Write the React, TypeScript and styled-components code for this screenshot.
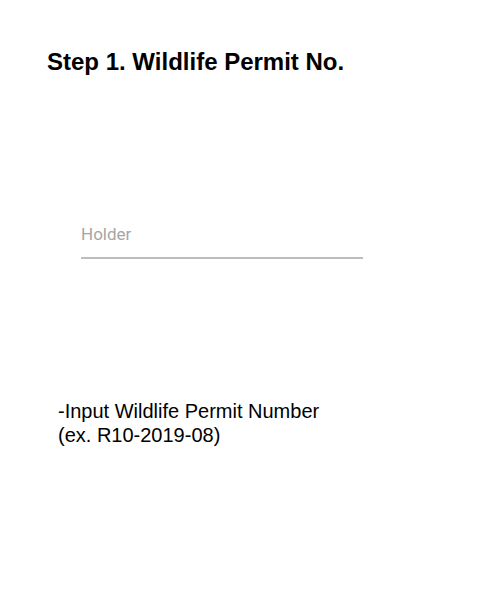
import React from "react";
import styled, { createGlobalStyle } from "styled-components";

const Global = createGlobalStyle`
  html, body { margin: 0; padding: 0; background: #ffffff; }
  body { font-family: "Liberation Sans", Arial, sans-serif; }
`;

const Page = styled.div`
  width: 500px;
  height: 602px;
  display: flex;
  flex-direction: column;
  box-sizing: border-box;
  padding: 48px 0 0 47px;
`;

const Title = styled.h1`
  margin: 0;
  font-family: "Liberation Sans", Arial, sans-serif;
  font-weight: 700;
  font-size: 24px;
  line-height: 28px;
  color: #000;
`;

const Field = styled.label`
  display: flex;
  flex-direction: column;
  width: 282px;
  margin: 148px 0 0 34px;
  border-bottom: 2px solid #bdbdbd;
  padding-bottom: 13px;
`;

const Input = styled.input`
  border: none;
  outline: none;
  padding: 0;
  background: transparent;
  font-family: Roboto, "Noto Sans", sans-serif;
  font-size: 17px;
  line-height: 20px;
  color: #333;
  &::placeholder { color: #a6a6a6; }
`;

const Hint = styled.p`
  margin: 140px 0 0 11px;
  font-family: "Liberation Sans", Arial, sans-serif;
  font-size: 20px;
  line-height: 24px;
  color: #000;
`;

export default function App() {
  return (
    <>
      <Global />
      <Page>
        <Title>Step 1. Wildlife Permit No.</Title>
        <Field>
          <Input placeholder="Holder" />
        </Field>
        <Hint>
          -Input Wildlife Permit Number
          <br />
          (ex. R10-2019-08)
        </Hint>
      </Page>
    </>
  );
}
